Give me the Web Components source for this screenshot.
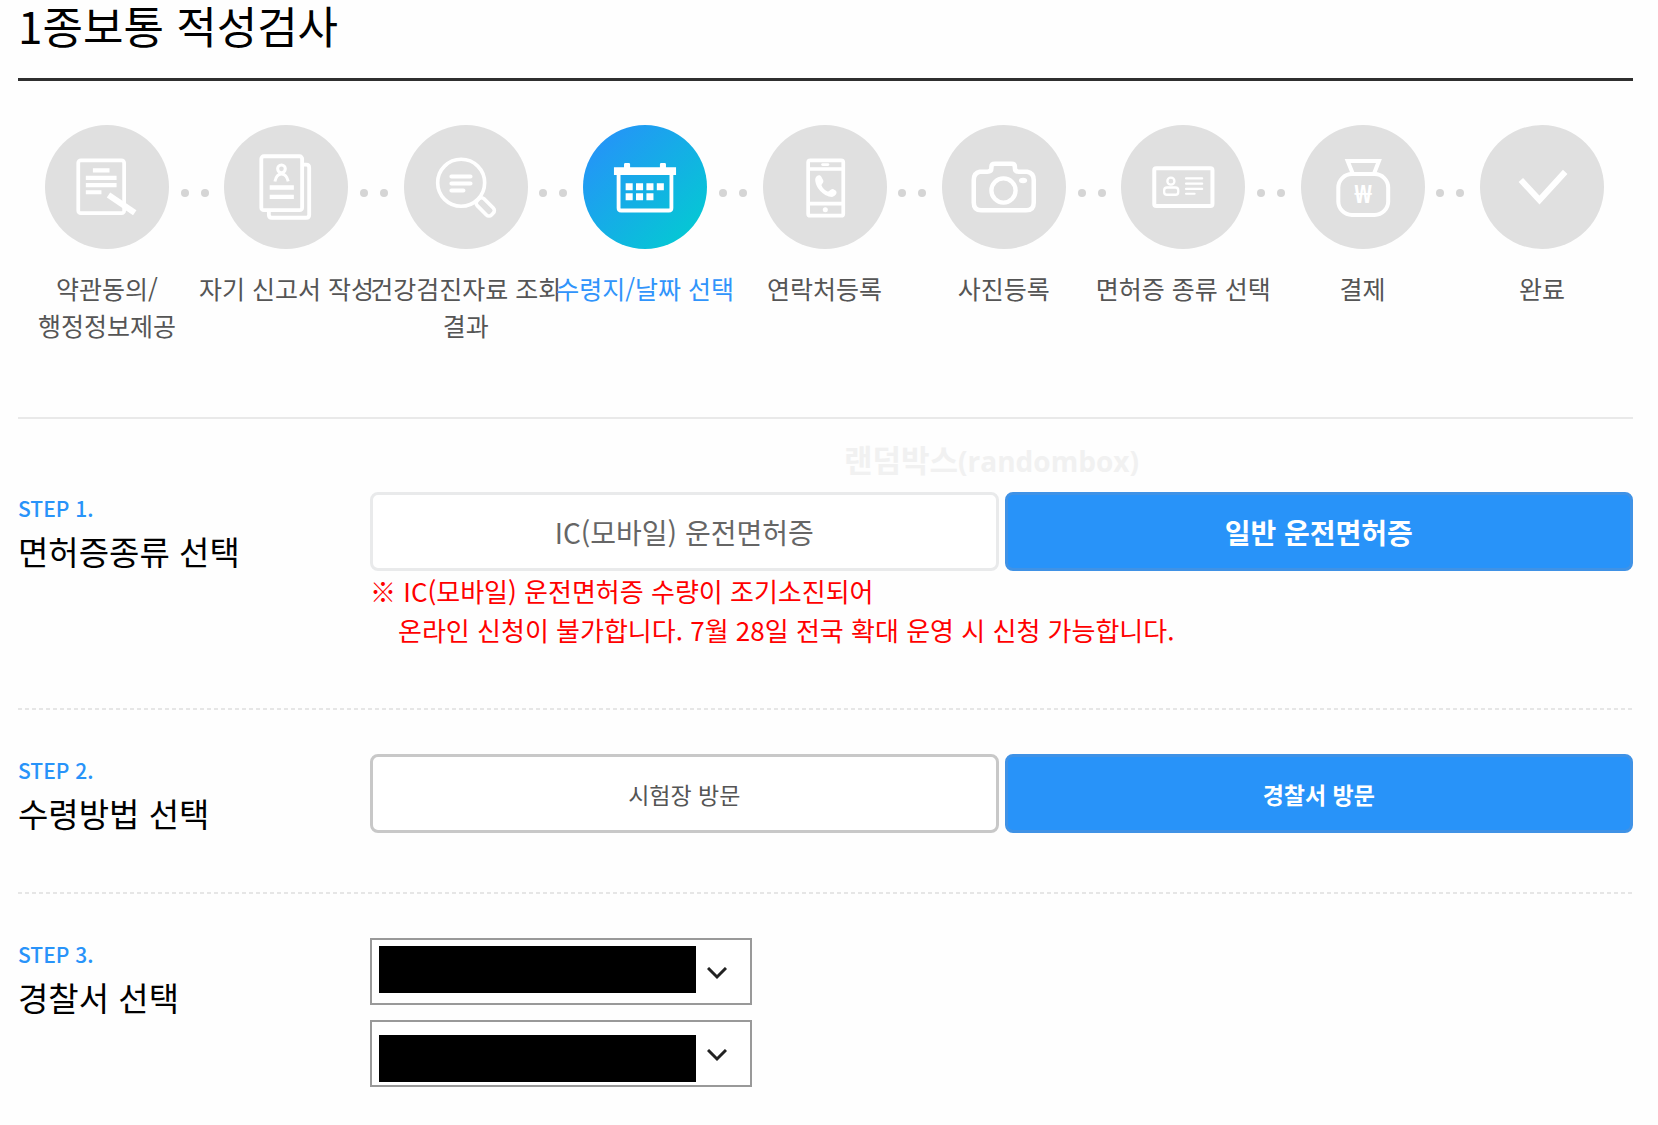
<!DOCTYPE html>
<html lang="ko">

<head>
  <meta charset="UTF-8">
  <meta name="viewport" content="width=device-width, initial-scale=1.0">
  <title>1종보통 적성검사</title>
  <style>
    body {
      margin: 0;
      background: #fefefe;
      color: #000;
      font-family: "Noto Sans CJK KR", "Noto Sans", sans-serif;
    }
  </style>
</head>

<body>
  <license-page>
    <span slot="title">1종보통 적성검사</span>

    <step-progress slot="progress">
      <step-item icon="terms">약관동의/<br>행정정보제공</step-item>
      <step-dots></step-dots>
      <step-item icon="report">자기 신고서 작성</step-item>
      <step-dots></step-dots>
      <step-item icon="search">건강검진자료 조회<br>결과</step-item>
      <step-dots></step-dots>
      <step-item icon="calendar" active>수령지/날짜 선택</step-item>
      <step-dots></step-dots>
      <step-item icon="phone">연락처등록</step-item>
      <step-dots></step-dots>
      <step-item icon="camera">사진등록</step-item>
      <step-dots></step-dots>
      <step-item icon="card">면허증 종류 선택</step-item>
      <step-dots></step-dots>
      <step-item icon="money">결제</step-item>
      <step-dots></step-dots>
      <step-item icon="check">완료</step-item>
    </step-progress>

    <form-step first>
      <span slot="step">STEP 1.</span>
      <span slot="name">면허증종류 선택</span>
      <water-mark>랜덤박스<span slot="latin">(randombox)</span></water-mark>
      <choice-group>
        <choice-button>IC(모바일) 운전면허증</choice-button>
        <choice-button selected>일반 운전면허증</choice-button>
      </choice-group>
      <notice-text>
        ※ IC(모바일) 운전면허증 수량이 조기소진되어
        <span slot="more">온라인 신청이 불가합니다. 7월 28일 전국 확대 운영 시 신청 가능합니다.</span>
      </notice-text>
    </form-step>

    <form-step>
      <span slot="step">STEP 2.</span>
      <span slot="name">수령방법 선택</span>
      <choice-group>
        <choice-button size="small" strong>시험장 방문</choice-button>
        <choice-button size="small" selected>경찰서 방문</choice-button>
      </choice-group>
    </form-step>

    <form-step>
      <span slot="step">STEP 3.</span>
      <span slot="name">경찰서 선택</span>
      <masked-select label="지역"></masked-select>
      <masked-select label="경찰서" mask="end"></masked-select>
    </form-step>
  </license-page>

  <script>
    // white line icons, all drawn on a 123 x 123 circle
    const ICONS = {
      terms: `
        <rect x="33" y="35" width="45.5" height="52.5" rx="2.5" stroke-width="3.7"/>
        <path stroke-width="4.2" d="M47.5 45H64M40.5 52.5H71M40.5 59.7H71M40.5 66.7H56"/>
        <path stroke-width="6" d="M63 69.5 89 87"/>`,
      report: `
        <rect x="37" y="31" width="40.5" height="53.5" rx="2.5" stroke-width="3.8"/>
        <path stroke-width="3.8" d="M78 39.3H81.5Q84.5 39.3 84.5 42.3V89Q84.5 92 81.5 92H47.5Q44.5 92 44.5 89V85"/>
        <circle cx="57" cy="43.5" r="3.8" stroke-width="3"/>
        <path stroke-width="3" d="M50.5 56Q52 48.5 57 48.5T63.7 56"/>
        <path stroke-width="4.3" d="M45.3 62H69.3M45.3 71.3H69.3"/>`,
      search: `
        <circle cx="56.7" cy="57.3" r="23.3" stroke-width="3.6"/>
        <path stroke-width="4" stroke-linecap="round" d="M47 51H66M47 58H66M47 65H59"/>
        <rect x="80.5" y="52.5" width="20" height="9.6" rx="3.5" stroke-width="3.6" transform="rotate(45 56.7 57.3)"/>`,
      calendar: `
        <path fill="#fff" stroke="none" d="M30.7 42H40.7V39Q40.7 37.7 42 37.7H45.4Q46.7 37.7 46.7 39V42H76.3V39Q76.3 37.7 77.6 37.7H81Q82.3 37.7 82.3 39V42H92.3V49.5H30.7Z"/>
        <path stroke-width="3.8" d="M35.3 48V82.3Q35.3 84.8 37.8 84.8H85.2Q87.7 84.8 87.7 82.3V48"/>
        <path stroke-width="7" stroke-dasharray="7 3.3" d="M42.3 61.2H80.5M42.3 71.2H70.5"/>`,
      phone: `
        <rect x="44.8" y="35" width="34.8" height="55" rx="2" stroke-width="3.7"/>
        <path stroke-width="3.5" d="M45 43.7H79M45 78H79"/>
        <path stroke-width="2.5" stroke-linecap="round" d="M59 39.3H64.5"/>
        <circle cx="61.8" cy="84" r="2.5" fill="#fff" stroke="none"/>
        <path fill="#fff" stroke="none" d="M51.8 53.5C52.5 50 56.5 48.5 58 51.5L59.8 55C60.5 57.5 57.5 58.5 58.2 60.3C59.5 63 61.5 65 64 66C66 66.5 67 62.8 69.5 63.5L72.3 65.3C74.3 67.5 71.5 71 68.5 71.3C60 71 51.5 61.5 51.8 53.5Z"/>`,
      camera: `
        <path stroke-width="4.5" stroke-linejoin="round" d="M37.5 46.3H45Q49 46.3 49 43V41.5Q49 38.5 52.5 38.5H69Q72.3 38.5 72.3 41.5V43Q72.3 46.3 76 46.3H84.5Q91 47.5 91 54.5V77Q91 84.5 83.5 84.5H39Q31.5 84.5 31.5 77V54.5Q31.5 47.5 37.5 46.3Z"/>
        <circle cx="61" cy="65" r="12" stroke-width="4.3"/>
        <ellipse cx="80.4" cy="55" rx="4" ry="2.7" fill="#fff" stroke="none"/>`,
      card: `
        <rect x="33" y="43" width="57.7" height="37.3" rx="2" stroke-width="4"/>
        <circle cx="49.5" cy="55.7" r="3.5" stroke-width="2.3"/>
        <rect x="42.8" y="62" width="14" height="7.2" rx="2.8" stroke-width="2.3"/>
        <path stroke-width="2.2" stroke-linecap="round" d="M64.5 53H80.5M64.5 58.2H80.5M64.5 63.4H80.5M64.5 68.2H73"/>`,
      money: `
        <path stroke-width="4" d="M51.5 48.5 46.3 35.7H77.3L72.3 48.5"/>
        <rect x="37" y="48.7" width="49.5" height="40.5" rx="13.5" stroke-width="4"/>
        <text x="61.8" y="77.7" text-anchor="middle" font-family="Noto Sans, Liberation Sans, sans-serif" font-size="24" font-weight="700" fill="#fff" stroke="none">₩</text>`,
      check: `
        <path stroke-width="6" d="M40.5 54.5 59 74.5 84.5 46.5"/>`
    };

    function attach(host, markup) {
      host.attachShadow({ mode: 'open' }).innerHTML = markup;
    }

    class LicensePage extends HTMLElement {
      constructor() {
        super();
        attach(this, `
          <style>
            :host { display: block; padding: 0 25px 0 18px; }
            h1 {
              margin: 0;
              padding-bottom: 28px;
              border-bottom: 3px solid #2f2f2f;
              font-size: 44px;
              font-weight: 400;
              line-height: 50px;
            }
          </style>
          <h1><slot name="title"></slot></h1>
          <slot name="progress"></slot>
          <main><slot></slot></main>
        `);
      }
    }

    class StepProgress extends HTMLElement {
      constructor() {
        super();
        attach(this, `
          <style>
            :host {
              display: flex;
              align-items: flex-start;
              min-height: 336px;
              box-sizing: border-box;
              padding: 44px 29px 0 27px;
            }
          </style>
          <slot></slot>
        `);
      }
    }

    class StepDots extends HTMLElement {
      constructor() {
        super();
        attach(this, `
          <style>
            :host {
              display: flex;
              flex: 1;
              justify-content: center;
              gap: 12px;
              padding: 64px 4px 0 0;
            }
            i { width: 8px; height: 8px; border-radius: 50%; background: #d5d5d5; }
          </style>
          <i></i><i></i>
        `);
      }
    }

    class StepItem extends HTMLElement {
      constructor() {
        super();
        attach(this, `
          <style>
            :host {
              display: flex;
              flex-direction: column;
              align-items: center;
              gap: 21px;
              width: 124px;
              color: #555;
              font-size: 25px;
              line-height: 37px;
              text-align: center;
              white-space: nowrap;
            }
            :host([active]) { color: #3094fb; }
            svg {
              width: 124px;
              height: 124px;
              border-radius: 50%;
              background: #e0e0e0;
              fill: none;
              stroke: #fff;
            }
            :host([active]) svg { background: linear-gradient(135deg, #2495f7 12%, #04c9d3 90%); }
          </style>
          <svg viewBox="0 0 123 123" aria-hidden="true">${ICONS[this.getAttribute('icon')]}</svg>
          <div><slot></slot></div>
        `);
      }
    }

    class FormStep extends HTMLElement {
      constructor() {
        super();
        attach(this, `
          <style>
            :host {
              display: grid;
              grid-template-columns: 352px 1fr;
              position: relative;
              padding: 46px 0 59px;
              background: repeating-linear-gradient(90deg, #e6e6e6 0 4px, transparent 4px 7px) top / 100% 2px no-repeat;
            }
            :host([first]) {
              padding-top: 73px;
              background: none;
              border-top: 2px solid #e9e9e9;
            }
            h2 { margin: 0; font-size: 33px; font-weight: 400; line-height: 40px; }
            small {
              display: block;
              margin-bottom: 7px;
              color: #2893f9;
              font-size: 21px;
              font-weight: 500;
              line-height: 32px;
            }
            .body { display: flex; flex-direction: column; gap: 15px; }
            :host([first]) .body { gap: 0; }
          </style>
          <h2><small><slot name="step"></slot></small><slot name="name"></slot></h2>
          <div class="body"><slot></slot></div>
        `);
      }
    }

    class ChoiceGroup extends HTMLElement {
      constructor() {
        super();
        attach(this, `
          <style>
            :host { display: grid; grid-template-columns: 1fr 1fr; gap: 6px; }
          </style>
          <slot></slot>
        `);
      }
    }

    class ChoiceButton extends HTMLElement {
      constructor() {
        super();
        attach(this, `
          <style>
            :host { display: block; }
            button {
              display: block;
              width: 100%;
              height: 79px;
              padding: 0;
              border: 3px solid #e9eaeb;
              border-radius: 8px;
              background: #fff;
              color: #666;
              font: 400 28px/40px "Noto Sans CJK KR", "Noto Sans", sans-serif;
              cursor: pointer;
            }
            :host([size="small"]) button { font-size: 23px; }
            :host([strong]) button { border-color: #c8c8c8; color: #555; }
            :host([selected]) button {
              border-color: #3f92e6;
              background: #2893f9;
              color: #fff;
              font-weight: 700;
            }
          </style>
          <button type="button" aria-pressed="${this.hasAttribute('selected')}"><slot></slot></button>
        `);
      }
    }

    class NoticeText extends HTMLElement {
      constructor() {
        super();
        attach(this, `
          <style>
            :host { display: block; color: #f00; font-size: 26px; line-height: 39px; }
            p { margin: 0; }
            p + p { padding-left: 28px; }
          </style>
          <p><slot></slot></p>
          <p><slot name="more"></slot></p>
        `);
      }
    }

    class WaterMark extends HTMLElement {
      constructor() {
        super();
        attach(this, `
          <style>
            :host {
              position: absolute;
              top: 18px;
              left: 826px;
              color: #f1f1f1;
              font: 700 31px/44px "Noto Sans CJK KR", sans-serif;
              pointer-events: none;
            }
            span { font-family: "Open Sans", sans-serif; font-size: 28px; }
          </style>
          <slot></slot><span><slot name="latin"></slot></span>
        `);
      }
    }

    class MaskedSelect extends HTMLElement {
      constructor() {
        super();
        attach(this, `
          <style>
            :host { display: flex; position: relative; width: 382px; height: 67px; }
            select {
              appearance: none;
              width: 100%;
              border: 2px solid #999;
              border-radius: 0;
              background: #fff;
              font-size: 25px;
            }
            .over {
              position: absolute;
              inset: 0;
              display: flex;
              gap: 11px;
              padding: 8px 9px 5px;
              pointer-events: none;
            }
            .mask { width: 317px; height: 47px; background: #000; }
            :host([mask="end"]) .mask { align-self: flex-end; }
            svg { align-self: center; width: 20px; height: 13px; fill: none; stroke: #222; stroke-width: 3; }
          </style>
          <select aria-label="${this.getAttribute('label')}"><option></option></select>
          <div class="over">
            <div class="mask"></div>
            <svg viewBox="0 0 20 13" aria-hidden="true"><path d="M1 1 10 10 19 1"/></svg>
          </div>
        `);
      }
    }

    customElements.define('license-page', LicensePage);
    customElements.define('step-progress', StepProgress);
    customElements.define('step-dots', StepDots);
    customElements.define('step-item', StepItem);
    customElements.define('form-step', FormStep);
    customElements.define('choice-group', ChoiceGroup);
    customElements.define('choice-button', ChoiceButton);
    customElements.define('notice-text', NoticeText);
    customElements.define('water-mark', WaterMark);
    customElements.define('masked-select', MaskedSelect);
  </script>
</body>

</html>
